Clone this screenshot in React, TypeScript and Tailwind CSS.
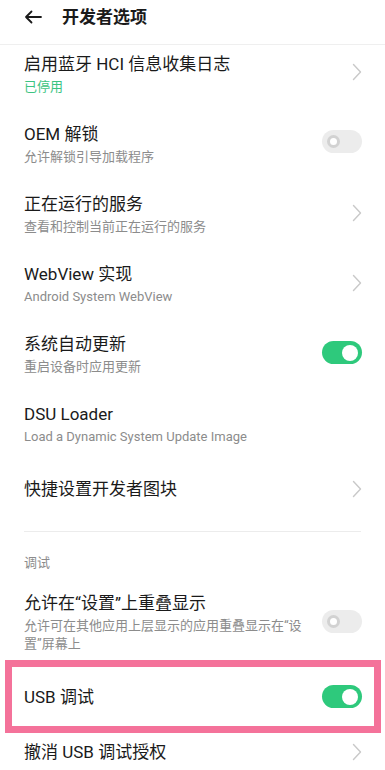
import React from 'react';

const FONT = "font-['Roboto','Noto_Sans_CJK_SC',sans-serif]";

function Chevron({ className = '' }: { className?: string }) {
  return (
    <svg width="10" height="18" viewBox="0 0 10 18" className={className}>
      <polyline
        points="1.5,1.5 8.5,9 1.5,16.5"
        fill="none"
        stroke="#c9c9c9"
        strokeWidth="1.4"
        strokeLinecap="round"
        strokeLinejoin="round"
      />
    </svg>
  );
}

function Toggle({ on, className = '' }: { on: boolean; className?: string }) {
  if (on) {
    return (
      <div className={`w-10 h-[23px] rounded-full bg-[#2ec97c] flex items-center justify-end pr-[4px] shrink-0 ${className}`}>
        <div className="w-4 h-4 rounded-full bg-white" />
      </div>
    );
  }
  return (
    <div className={`w-10 h-[23px] rounded-full bg-[#ececec] flex items-center pl-[5px] shrink-0 ${className}`}>
      <div className="w-[13px] h-[13px] rounded-full bg-white border-[3px] border-[#d2d2d2]" />
    </div>
  );
}

type RowProps = {
  title: string;
  sub?: string;
  subGreen?: boolean;
  right?: React.ReactNode;
  height?: string;
};

function Row({ title, sub, subGreen, right, height = 'h-[70px]' }: RowProps) {
  return (
    <div className={`flex items-start pl-6 pr-[23px] ${height}`}>
      <div className="flex-1 min-w-0 pt-[7px]">
        <div className="text-[17px] leading-6 text-[#1a1a1a]">{title}</div>
        {sub && (
          <div
            className={`mt-[1px] text-[13px] leading-5 ${subGreen ? 'text-[#3cc482]' : 'text-[#8c8c8c]'}`}
          >
            {sub}
          </div>
        )}
      </div>
      {right}
    </div>
  );
}

export default function App() {
  return (
    <div className={`w-[385px] h-[770px] overflow-hidden bg-white relative ${FONT}`}>
      {/* 顶部标题栏 */}
      <div className="h-[45px] flex items-start pt-[6px] border-b border-[#efefef]">
        <div className="w-[62px] pl-6 h-[22px] flex items-center">
          <svg width="18" height="14" viewBox="0 0 18 14">
            <path
              d="M17 7H2M7.5 1.5L2 7l5.5 5.5"
              fill="none"
              stroke="#1a1a1a"
              strokeWidth="1.8"
              strokeLinecap="round"
              strokeLinejoin="round"
            />
          </svg>
        </div>
        <div className="text-[17px] leading-[22px] font-bold text-[#1a1a1a]">开发者选项</div>
      </div>

      <Row
        title="启用蓝牙 HCI 信息收集日志"
        sub="已停用"
        subGreen
        right={<Chevron className="mt-[18px]" />}
      />
      <Row
        title="OEM 解锁"
        sub="允许解锁引导加载程序"
        right={<Toggle on={false} className="mt-[15px]" />}
      />
      <Row
        title="正在运行的服务"
        sub="查看和控制当前正在运行的服务"
        right={<Chevron className="mt-[19px]" />}
      />
      <Row
        title="WebView 实现"
        sub="Android System WebView"
        right={<Chevron className="mt-[19px]" />}
      />
      <Row
        title="系统自动更新"
        sub="重启设备时应用更新"
        right={<Toggle on className="mt-[16px]" />}
      />
      <Row title="DSU Loader" sub="Load a Dynamic System Update Image" />

      <div className="h-[48px] flex items-center pl-6 pr-[23px]">
        <div className="flex-1 text-[17px] leading-6 text-[#1a1a1a]">快捷设置开发者图块</div>
        <Chevron />
      </div>

      <div className="h-[18px]" />
      <div className="mx-6 h-px bg-[#ececec]" />

      {/* 调试 */}
      <div className="h-[52px] pl-6 pt-[22px]">
        <div className="text-[13px] leading-[18px] text-[#8c8c8c]">调试</div>
      </div>

      <div className="h-[76px] flex items-start pl-6 pr-[23px]">
        <div className="flex-1 min-w-0 pt-[7px] pr-[2px]">
          <div className="text-[17px] leading-6 text-[#1a1a1a]">允许在“设置”上重叠显示</div>
          <div className="mt-[2px] text-[13px] leading-[18px] text-[#8c8c8c]">
            允许可在其他应用上层显示的应用重叠显示在“设置”屏幕上
          </div>
        </div>
        <Toggle on={false} className="mt-[26px]" />
      </div>

      <div className="relative h-[73px] flex items-center pl-6 pr-[23px]">
        <div className="flex-1 text-[17px] leading-6 text-[#1a1a1a]">USB 调试</div>
        <Toggle on />
        {/* 高亮标注框 */}
        <div className="absolute left-[5px] top-0 w-[376px] h-[73px] border-[7px] border-[#f4729a] pointer-events-none" />
      </div>

      <div className="h-[37px] flex items-center pl-6 pr-[23px]">
        <div className="flex-1 text-[17px] leading-6 text-[#1a1a1a]">撤消 USB 调试授权</div>
        <Chevron />
      </div>
    </div>
  );
}
